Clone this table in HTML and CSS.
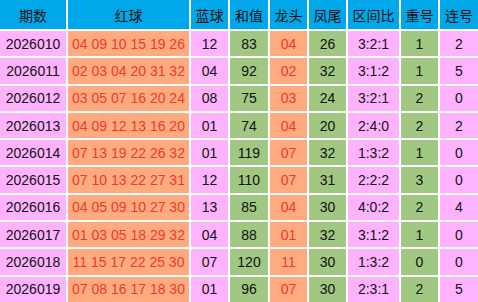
FILE: index.html
```html
<!DOCTYPE html>
<html lang="zh">
<head>
<meta charset="utf-8">
<link rel="stylesheet" href="styles.css">
</head>
<body>
<div class="table">
  <div class="h">期数</div><div class="h">红球</div><div class="h">蓝球</div><div class="h">和值</div><div class="h">龙头</div><div class="h">凤尾</div><div class="h">区间比</div><div class="h">重号</div><div class="h">连号</div>

  <div class="pk">2026010</div><div class="sa">04 09 10 15 19 26</div><div class="pk">12</div><div class="gr">83</div><div class="sa">04</div><div class="gr">26</div><div class="pk">3:2:1</div><div class="gr">1</div><div class="pk">2</div>
  <div class="pk">2026011</div><div class="sa">02 03 04 20 31 32</div><div class="pk">04</div><div class="gr">92</div><div class="sa">02</div><div class="gr">32</div><div class="pk">3:1:2</div><div class="gr">1</div><div class="pk">5</div>
  <div class="pk">2026012</div><div class="sa">03 05 07 16 20 24</div><div class="pk">08</div><div class="gr">75</div><div class="sa">03</div><div class="gr">24</div><div class="pk">3:2:1</div><div class="gr">2</div><div class="pk">0</div>
  <div class="pk">2026013</div><div class="sa">04 09 12 13 16 20</div><div class="pk">01</div><div class="gr">74</div><div class="sa">04</div><div class="gr">20</div><div class="pk">2:4:0</div><div class="gr">2</div><div class="pk">2</div>
  <div class="pk">2026014</div><div class="sa">07 13 19 22 26 32</div><div class="pk">01</div><div class="gr">119</div><div class="sa">07</div><div class="gr">32</div><div class="pk">1:3:2</div><div class="gr">1</div><div class="pk">0</div>
  <div class="pk">2026015</div><div class="sa">07 10 13 22 27 31</div><div class="pk">12</div><div class="gr">110</div><div class="sa">07</div><div class="gr">31</div><div class="pk">2:2:2</div><div class="gr">3</div><div class="pk">0</div>
  <div class="pk">2026016</div><div class="sa">04 05 09 10 27 30</div><div class="pk">13</div><div class="gr">85</div><div class="sa">04</div><div class="gr">30</div><div class="pk">4:0:2</div><div class="gr">2</div><div class="pk">4</div>
  <div class="pk">2026017</div><div class="sa">01 03 05 18 29 32</div><div class="pk">04</div><div class="gr">88</div><div class="sa">01</div><div class="gr">32</div><div class="pk">3:1:2</div><div class="gr">1</div><div class="pk">0</div>
  <div class="pk">2026018</div><div class="sa">11 15 17 22 25 30</div><div class="pk">07</div><div class="gr">120</div><div class="sa">11</div><div class="gr">30</div><div class="pk">1:3:2</div><div class="gr">0</div><div class="pk">0</div>
  <div class="pk">2026019</div><div class="sa">07 08 16 17 18 30</div><div class="pk">01</div><div class="gr">96</div><div class="sa">07</div><div class="gr">30</div><div class="pk">2:3:1</div><div class="gr">2</div><div class="pk">5</div>
</div>
</body>
</html>
```
FILE: styles.css
```css
html, body {
  margin: 0;
  padding: 0;
  background: #ffffff;
}
.table {
  width: 478px;
  height: 302px;
  display: grid;
  grid-template-columns: 66px 121px 37px 38px 37px 37px 51px 37px 38px;
  grid-template-rows: 29px repeat(10, 1fr);
  gap: 2px;
  background: #ffffff;
  font-family: "Liberation Sans", Arial, "Noto Sans CJK SC", sans-serif;
  font-size: 14px;
  color: #111111;
}
.table > div {
  display: flex;
  align-items: center;
  justify-content: center;
  white-space: nowrap;
}
.h {
  background: #00a8ea;
  font-family: "Noto Sans CJK SC", sans-serif;
  font-size: 14px;
  color: #111111;
}
.pk {
  background: #ffb3ff;
}
.sa {
  background: #ffab7f;
  color: #ee3a2a;
}
.gr {
  background: #a0c882;
}
```
